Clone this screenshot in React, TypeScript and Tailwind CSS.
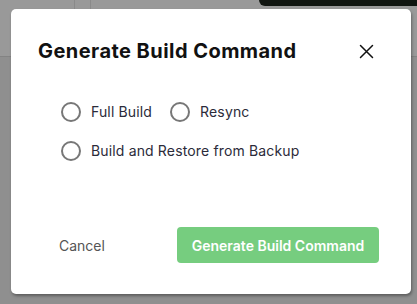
import React from "react";

const OPTIONS_ROW_1 = ["Full Build", "Resync"];

const Radio = ({ label }: { label: string }) => (
  <label className="flex items-center gap-[10px] cursor-pointer">
    <span className="w-5 h-5 rounded-full border-2 border-[#777777] bg-white shrink-0" />
    <span className="text-[14px] leading-5 text-[#2b2b3a] tracking-[0.15px]">{label}</span>
  </label>
);

export default function App() {
  return (
    <div
      className="relative w-[417px] h-[304px] overflow-hidden bg-[#8f8f8f]"
      style={{ fontFamily: "Inter, 'Noto Sans', sans-serif" }}
    >
      {/* page behind the overlay */}
      <div className="flex h-[57px] border-b border-[#838383] bg-[#999999]">
        <div className="w-[75px] border-r border-[#8a8a8a]" />
        <div className="w-[16px] border-r border-[#8a8a8a]" />
        <div className="flex-1 flex justify-end items-start">
          <div className="w-[158px] h-[6px] bg-[#101510] rounded-bl-[6px]" />
        </div>
      </div>

      {/* modal */}
      <div className="absolute left-[11px] top-[9px] w-[400px] h-[285px] bg-white rounded-[5px] shadow-[1px_2px_3px_rgba(0,0,0,0.35)] flex flex-col">
        <div className="flex items-center justify-between pl-[27px] pr-[37px] pt-[28px]">
          <h2 className="text-[20px] leading-7 font-bold text-[#111111] tracking-[0.45px]">
            Generate Build Command
          </h2>
          <button className="w-[15px] h-[15px] flex items-center justify-center text-[#111111]">
            <svg width="15" height="15" viewBox="0 0 15 15" fill="none">
              <path d="M1.5 1.5L13.5 13.5M13.5 1.5L1.5 13.5" stroke="currentColor" strokeWidth="1.5" strokeLinecap="round" />
            </svg>
          </button>
        </div>

        <div className="flex flex-col gap-[19px] pl-[50px] pt-[37px]">
          <div className="flex items-center gap-[18px]">
            {OPTIONS_ROW_1.map((o) => (
              <Radio key={o} label={o} />
            ))}
          </div>
          <Radio label="Build and Restore from Backup" />
        </div>

        <div className="mt-auto flex items-center justify-between pl-[48px] pr-[32px] pb-[31px]">
          <button className="text-[14px] text-[#555555]">Cancel</button>
          <button className="w-[202px] h-9 rounded-[4px] bg-[#76cd7f] text-white text-[14px] font-semibold">
            Generate Build Command
          </button>
        </div>
      </div>
    </div>
  );
}
